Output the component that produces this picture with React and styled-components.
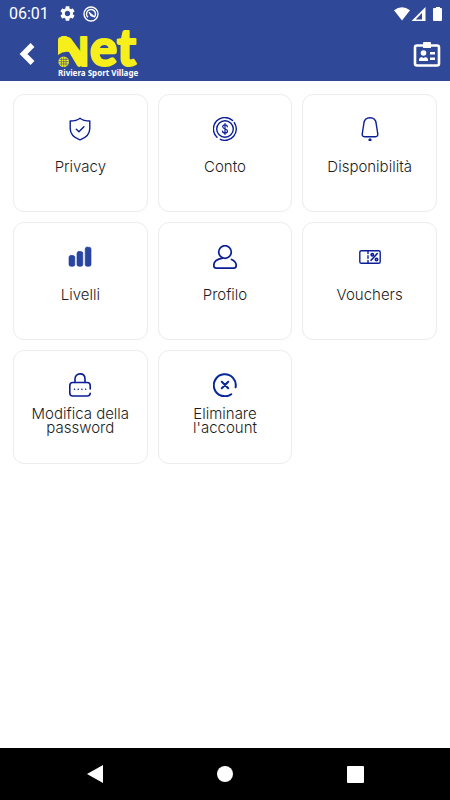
import React from 'react';
import styled, { createGlobalStyle } from 'styled-components';

const GlobalStyle = createGlobalStyle`
  * {
    box-sizing: border-box;
  }

  body {
    margin: 0;
    background: #ffffff;
    font-family: Inter, "Open Sans", sans-serif;
  }
`;

const Screen = styled.div`
  display: flex;
  flex-direction: column;
  min-height: 100vh;
`;

const TopArea = styled.header`
  background: #2f4998;
  color: #ffffff;
`;

const StatusBar = styled.div`
  display: flex;
  align-items: center;
  height: 27px;
  padding: 0 8px 0 9px;
`;

const Clock = styled.time`
  margin-right: 11px;
  font-family: Roboto, sans-serif;
  font-size: 16px;
  line-height: 27px;
`;

const StatusIcons = styled.div`
  display: flex;
  align-items: center;
  gap: 8px;
  margin-left: ${({ $end }) => ($end ? 'auto' : '0')};

  svg {
    display: block;
  }
`;

const Toolbar = styled.div`
  display: flex;
  align-items: center;
  height: 54px;
  padding: 0 9px 0 13px;
`;

const IconButton = styled.button`
  display: flex;
  align-items: center;
  justify-content: center;
  width: ${({ $width }) => $width}px;
  height: 40px;
  padding: 0;
  border: 0;
  background: none;
  color: inherit;
  cursor: pointer;
`;

const Brand = styled.a`
  display: block;
  margin: 0 auto 0 17px;

  svg {
    display: block;
    overflow: visible;
  }
`;

const Menu = styled.main`
  flex: 1;
  display: grid;
  grid-template-columns: repeat(3, 1fr);
  align-content: start;
  gap: 10px;
  padding: 13px;
`;

const MenuCard = styled.button`
  display: flex;
  flex-direction: column;
  align-items: center;
  padding: 22px 12px ${({ $twoLines }) => ($twoLines ? 28 : 37)}px;
  border: 1px solid #ececec;
  border-radius: 11px;
  background: #ffffff;
  color: #1c1c1c;
  font-family: inherit;
  cursor: pointer;
`;

const MenuIcon = styled.svg`
  width: 24px;
  height: 24px;
  fill: none;
  stroke: #0a1f97;
  stroke-width: 1.4;
  stroke-linecap: round;
  stroke-linejoin: round;
`;

const MenuLabel = styled.span`
  margin-top: ${({ $twoLines }) => ($twoLines ? 10 : 19)}px;
  font-size: 15px;
  font-weight: 300;
  line-height: 14px;
  text-align: center;
`;

const NavBar = styled.nav`
  display: flex;
  align-items: center;
  justify-content: space-around;
  height: 52px;
  padding: 0 30px;
  background: #000000;
`;

const Logo = () => (
  <svg width="80" height="46" viewBox="0 0 80 46" role="img" aria-label="Net Riviera Sport Village">
    <g
      fill="#f6ef1b"
      stroke="#f6ef1b"
      strokeWidth="2"
      strokeLinejoin="round"
      fontFamily="Lato, sans-serif"
      fontWeight="900"
    >
      <text x="1" y="35" fontSize="39">N</text>
      <text x="32" y="35" fontSize="51">et</text>
    </g>
    {/* swoosh and ball stand where the left leg of the N would be */}
    <path d="M-1 18h14l2 6v13H-1z" fill="#2f4998" />
    <path d="M0 24V9q0-3 3-3h7q2 0 3 1.500L28 28l-6 8q-2 0-3-1.500L11 21Q5 20 0 24z" fill="#f6ef1b" />
    <circle cx="5.700" cy="30.700" r="5.300" fill="#f6ef1b" />
    <path
      d="M3.400 26.500v8.400M5.700 25.500v10.400M8 26.500v8.400M1.500 28.400h8.400M.5 30.700h10.400M1.500 33h8.400"
      stroke="#2f4998"
      strokeWidth="0.6"
    />
    <text
      x="0"
      y="45"
      fill="#ffffff"
      fontFamily="'Noto Sans', sans-serif"
      fontSize="8"
      fontWeight="700"
    >
      Riviera Sport Village
    </text>
  </svg>
);

const items = [
  {
    label: 'Privacy',
    icon: (
      <>
        <path d="M12 1.200C9.500 3.200 6 4 2.200 4v7.500c0 5.200 4 9.300 9.800 11.300 5.800-2 9.800-6.100 9.800-11.300V4C18 4 14.500 3.200 12 1.200z" />
        <path d="M8.300 12.200l2.600 2.500 5-5" />
      </>
    ),
  },
  {
    label: 'Conto',
    icon: (
      <>
        <circle cx="12" cy="12" r="8.300" />
        <path d="M4 20.200A11.300 11.300 0 0 1 19.600 3.600M21.300 5.600A11.300 11.300 0 0 1 7.300 22.300" />
        <path
          strokeWidth="1.200"
          d="M14.300 9.800c0-1.200-1-1.900-2.300-1.900s-2.300.7-2.300 1.900c0 2.800 4.800 1.500 4.800 4.300 0 1.300-1.100 2-2.500 2s-2.500-.7-2.500-2M12 6.500v11"
        />
      </>
    ),
  },
  {
    label: 'Disponibilità',
    icon: (
      <>
        <path d="M12 .8c-3.500 0-5.900 2.500-6.200 6L4.300 16.500c-.4 2.200.4 3.200 2.200 3.200h11c1.800 0 2.600-1 2.200-3.200L18.200 6.800c-.3-3.500-2.700-6-6.200-6z" />
        <circle cx="12" cy="22.800" r="0.900" fill="#0a1f97" />
      </>
    ),
  },
  {
    label: 'Livelli',
    icon: (
      <g fill="#2845a0" stroke="#2038a0" strokeWidth="0.6">
        <rect x="1" y="10.500" width="5.800" height="10.800" rx="1.800" />
        <rect x="9" y="6.500" width="5.800" height="14.800" rx="1.800" />
        <rect x="17.200" y="2.200" width="5.800" height="19.100" rx="1.800" />
      </g>
    ),
  },
  {
    label: 'Profilo',
    icon: (
      <g strokeWidth="1.700">
        <circle cx="12" cy="7" r="6.300" />
        <path d="M9.500 13.200C4.500 14 .8 16.500.8 20.500c0 1.700.8 2.600 2.400 2.600h17.600c1.600 0 2.400-.9 2.400-2.600 0-2.800-1.700-4.800-4.700-6" />
      </g>
    ),
  },
  {
    label: 'Vouchers',
    icon: (
      <>
        <rect x="1.800" y="5.700" width="20.400" height="12.600" rx="1.600" />
        <path d="M10 6v2.500M10 10.800v2.400M10 15.500V18" />
        <g strokeWidth="1.600">
          <path d="M19.300 8.500l-6.200 6.800" />
          <circle cx="14.300" cy="9.800" r="1.200" />
          <circle cx="18.500" cy="14.500" r="1.200" />
        </g>
      </>
    ),
  },
  {
    label: 'Modifica della password',
    twoLines: true,
    icon: (
      <g strokeWidth="1.600">
        <path d="M7 9.500V6C7 3 9 .9 12 .9S17 3 17 6v3.500" />
        <path d="M22.200 16v-3.500c0-2-1-3-3-3H4.800c-2 0-3 1-3 3V20c0 2 1 3 3 3h14.400c2 0 2.900-1 3-2.800" />
        <path d="M6.500 16.200h.01M10.200 16.200h.01M13.900 16.200h.01M17.600 16.200h.01" />
      </g>
    ),
  },
  {
    label: "Eliminare l'account",
    twoLines: true,
    icon: (
      <g stroke="#06269a" strokeWidth="2">
        <path d="M18.200 21.200A11 11 0 1 1 22.600 14.300" />
        <path d="M8.800 8.800l6.400 6.400M15.200 8.800l-6.400 6.400" />
      </g>
    ),
  },
];

const App = () => {
  return (
    <Screen>
      <GlobalStyle />
      <TopArea>
        <StatusBar>
          <Clock>06:01</Clock>
          <StatusIcons>
            <svg width="15" height="15" viewBox="2 2 20 20" fill="currentColor">
              <path d="M19.140 12.940c.04-.3.06-.61.06-.94 0-.32-.02-.64-.07-.94l2.030-1.580c.18-.14.23-.41.12-.61l-1.920-3.320c-.12-.22-.37-.29-.59-.22l-2.390.96c-.5-.38-1.030-.7-1.620-.94l-.36-2.540c-.04-.24-.24-.41-.48-.41h-3.840c-.24 0-.43.17-.47.41l-.36 2.540c-.59.24-1.130.57-1.620.94l-2.390-.96c-.22-.08-.47 0-.59.22L2.740 8.870c-.12.21-.08.47.12.61l2.030 1.580c-.05.3-.09.63-.09.94s.02.64.07.94l-2.030 1.580c-.18.14-.23.41-.12.61l1.920 3.320c.12.22.37.29.59.22l2.390-.96c.5.38 1.030.7 1.620.94l.36 2.540c.05.24.24.41.48.41h3.840c.24 0 .44-.17.47-.41l.36-2.540c.59-.24 1.130-.56 1.620-.94l2.390.96c.22.08.47 0 .59-.22l1.920-3.320c.12-.22.07-.47-.12-.61l-2.010-1.580zM12 15.600c-1.980 0-3.600-1.620-3.600-3.600s1.620-3.600 3.600-3.600 3.600 1.620 3.600 3.600-1.620 3.600-3.600 3.600z" />
            </svg>
            <svg width="16" height="16" viewBox="0 0 16 16" fill="none" stroke="currentColor">
              <circle cx="8" cy="8" r="7" strokeWidth="1.400" />
              <path d="M5 11.300A4.500 4.500 0 1 1 11.300 11" strokeWidth="1.400" />
              <path d="M6 6l5.800 5-4-1.200z" fill="currentColor" />
            </svg>
          </StatusIcons>
          <StatusIcons $end>
            <svg width="48" height="16" viewBox="0 0 48 16" fill="currentColor">
              <path d="M0 4.200Q8-1.500 16 4.200L8 14.500z" />
              <path d="M31.500 1V15H17.500zM28 7L21.800 13.400H28z" fillRule="evenodd" />
              <path d="M39 3q0-1 1-1h2V1h4v1h1q1 0 1 1v11q0 1-1 1h-7q-1 0-1-1z" />
            </svg>
          </StatusIcons>
        </StatusBar>
        <Toolbar>
          <IconButton $width={28} type="button" aria-label="Indietro">
            <svg width="20" height="24" viewBox="0 0 20 24" fill="none" stroke="currentColor" strokeWidth="5.500">
              <path d="M15.500 3L6.500 12l9 9" />
            </svg>
          </IconButton>
          <Brand href="#">
            <Logo />
          </Brand>
          <IconButton $width={28} type="button" aria-label="Tessera">
            <svg width="28" height="26" viewBox="0 0 28 26" fill="currentColor">
              <rect x="2" y="4.500" width="24" height="20" rx="2" fill="none" stroke="currentColor" strokeWidth="2.600" />
              <path d="M10 2q0-1 1-1h6q1 0 1 1v5h-8z" />
              <circle cx="10.500" cy="12" r="2.800" />
              <path d="M6 20v-1.500q0-2 2.500-2.500l2 1 2-1q2.500.5 2.500 2.500V20z" />
              <path d="M17 11h5v2.400h-5zM17 16.500h5v2.400h-5z" />
            </svg>
          </IconButton>
        </Toolbar>
      </TopArea>
      <Menu>
        {items.map(({ label, icon, twoLines }) => (
          <MenuCard key={label} type="button" $twoLines={twoLines}>
            <MenuIcon viewBox="0 0 24 24" aria-hidden="true">
              {icon}
            </MenuIcon>
            <MenuLabel $twoLines={twoLines}>{label}</MenuLabel>
          </MenuCard>
        ))}
      </Menu>
      <NavBar>
        <IconButton $width={40} type="button" aria-label="Indietro">
          <svg width="16" height="18" viewBox="0 0 16 18" fill="#ffffff">
            <path d="M0 9L16 0v18z" />
          </svg>
        </IconButton>
        <IconButton $width={40} type="button" aria-label="Home">
          <svg width="16" height="16" viewBox="0 0 16 16" fill="#ffffff">
            <circle cx="8" cy="8" r="8" />
          </svg>
        </IconButton>
        <IconButton $width={40} type="button" aria-label="Recenti">
          <svg width="17" height="17" viewBox="0 0 17 17" fill="#ffffff">
            <rect width="17" height="17" rx="1" />
          </svg>
        </IconButton>
      </NavBar>
    </Screen>
  );
};

export default App;
